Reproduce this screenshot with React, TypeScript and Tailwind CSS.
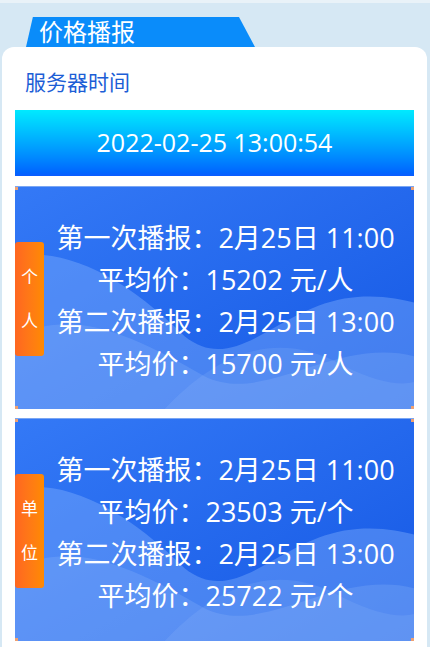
import React from 'react';

const cjk = { fontFamily: '"Open Sans", "Noto Sans CJK SC", sans-serif' };

const reports = [
  {
    tag: ['个', '人'],
    lines: [
      ['第一次播报：', '2月25日 11:00'],
      ['平均价：', '15202 元/人'],
      ['第二次播报：', '2月25日 13:00'],
      ['平均价：', '15700 元/人'],
    ],
  },
  {
    tag: ['单', '位'],
    lines: [
      ['第一次播报：', '2月25日 11:00'],
      ['平均价：', '23503 元/个'],
      ['第二次播报：', '2月25日 13:00'],
      ['平均价：', '25722 元/个'],
    ],
  },
];

function Waves() {
  return (
    <svg className="absolute inset-0 w-full h-full" viewBox="0 0 400 223" preserveAspectRatio="none">
      <path d="M0 70 C 50 60, 110 90, 170 150 C 220 190, 260 125, 330 112 C 360 107, 385 112, 400 116 L400 223 L0 223 Z" fill="rgba(140,185,255,0.38)" />
      <path d="M0 150 C 60 120, 120 150, 190 190 C 250 220, 320 150, 400 170 L400 223 L0 223 Z" fill="rgba(170,205,255,0.18)" />
      <path d="M150 223 C 200 170, 260 140, 330 180 C 360 195, 385 200, 400 196 L400 223 Z" fill="rgba(180,210,255,0.12)" />
    </svg>
  );
}

function ReportCard({ tag, lines }: { tag: string[]; lines: string[][] }) {
  return (
    <div className="relative h-[223px] overflow-hidden bg-gradient-to-br from-[#3479f6] to-[#1457e4] border-t border-[#7aa6f3]">
      <Waves />
      <div className="absolute left-0 top-0 w-[3px] h-[3px] bg-[#f0a070]" />
      <div className="absolute right-0 top-0 w-[3px] h-[3px] bg-[#f0a070]" />
      <div className="absolute left-0 bottom-0 w-[3px] h-[3px] bg-[#f0a070]" />
      <div className="absolute right-0 bottom-0 w-[3px] h-[3px] bg-[#f0a070]" />
      <div className="absolute left-0 top-[55px] w-[29px] h-[114px] rounded-[3px] bg-gradient-to-r from-[#ff6620] to-[#ff8a00] flex flex-col items-center justify-center gap-[20px] text-white text-[17px] leading-[24px]" style={cjk}>
        <span>{tag[0]}</span>
        <span>{tag[1]}</span>
      </div>
      <div className="relative pt-[30px] pl-[22px] flex flex-col items-center text-white text-[27px] leading-[42px]" style={cjk}>
        {lines.map((l, i) => (
          <div key={i} className="whitespace-nowrap">
            {l[0]}
            {l[1]}
          </div>
        ))}
      </div>
    </div>
  );
}

export default function App() {
  return (
    <div className="w-[430px] h-[647px] overflow-hidden bg-[#d6e8f4] border-t-[3px] border-[#e9f2f8]" style={cjk}>
      <div className="ml-[26px] mt-[14px] w-[229px] h-[30px] bg-[#0a8cfa] [clip-path:polygon(3%_0,93%_0,100%_100%,0_100%)] flex items-center pl-[13px] text-white text-[24px] leading-none">
        价格播报
      </div>
      <div className="ml-[2px] mr-[3px] bg-white rounded-t-[12px] px-[13px] pt-[21px] h-[700px]">
        <div className="text-[#1c5ed6] text-[21px] leading-[28px] pl-[10px] mb-[14px]">服务器时间</div>
        <div className="h-[66px] bg-gradient-to-b from-[#00eaff] to-[#0b5cff] flex items-center justify-center text-white text-[25px]">
          2022-02-25 13:00:54
        </div>
        <div className="mt-[10px] flex flex-col gap-[9px]">
          {reports.map((r, i) => (
            <ReportCard key={i} tag={r.tag} lines={r.lines} />
          ))}
        </div>
      </div>
    </div>
  );
}
